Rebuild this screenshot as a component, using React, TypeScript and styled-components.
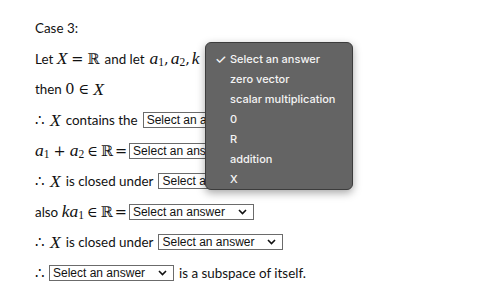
import React from "react"
import styled, { createGlobalStyle } from "styled-components"

const GlobalStyle = createGlobalStyle`
  body {
    margin: 0;
    background: #ffffff;
    font-family: Lato, "Open Sans", sans-serif;
    color: #111;
  }
`

const Page = styled.div`
  position: relative;
  width: 491px;
  height: 307px;
  padding: 13px 0 0 35px;
  box-sizing: border-box;
  overflow: hidden;
`

const Line = styled.div`
  display: flex;
  align-items: center;
  height: 30.6px;
  font-size: 13.4px;
  white-space: nowrap;
`

const M = styled.span<{ gap?: number; after?: number }>`
  font-family: "DejaVu Serif", "Liberation Serif", serif;
  font-size: 14.5px;
  margin: 0 ${({ after, gap }) => after ?? gap ?? 0}px 0 ${({ gap }) => gap ?? 0}px;
`

const I = styled.i`
  font-family: "Liberation Serif", "DejaVu Serif", serif;
  font-size: 17.5px;
`

const Sub = styled.span`
  font-family: "Liberation Serif", serif;
  font-size: 11.5px;
  position: relative;
  top: 3px;
`

const Word = styled.span`
  margin: 0 5px;
`

const SelectBox = styled.div<{ ml?: number }>`
  display: inline-flex;
  align-items: center;
  justify-content: space-between;
  width: 125px;
  height: 16px;
  box-sizing: border-box;
  border: 1px solid #6b6b6b;
  padding: 0 6px 0 3px;
  font-family: "Liberation Sans", Arial, sans-serif;
  font-size: 12px;
  color: #111;
  background: #fff;
  margin-left: ${({ ml }) => ml ?? 0}px;
`

const Chevron = () => (
  <svg width="9" height="6" viewBox="0 0 9 6">
    <path d="M1 1 L4.5 4.5 L8 1" fill="none" stroke="#111" strokeWidth="1.6" />
  </svg>
)

const Select = ({ ml }: { ml?: number }) => (
  <SelectBox ml={ml}>
    <span>Select an answer</span>
    <Chevron />
  </SelectBox>
)

const Menu = styled.div`
  position: absolute;
  left: 205px;
  top: 42px;
  width: 148px;
  height: 148px;
  box-sizing: border-box;
  background: #646464;
  border: 1px solid #3c3c3c;
  border-radius: 6px;
  box-shadow: 0 3px 8px rgba(0, 0, 0, 0.35);
  padding: 6px 0 0 0;
  font-family: Inter, "Liberation Sans", sans-serif;
  font-size: 11px;
  font-weight: 500;
  color: #f4f4f4;
`

const MenuItem = styled.div`
  display: flex;
  align-items: center;
  height: 20px;
  padding-left: 24px;
  position: relative;
`

const Check = styled.span`
  position: absolute;
  left: 9px;
  top: 2px;
  font-size: 13px;
`

const items = ["zero vector", "scalar multiplication", "0", "R", "addition", "X"]

export default function App() {
  return (
    <>
      <GlobalStyle />
      <Page>
        <Line>Case 3:</Line>
        <Line>
          Let&nbsp;<I>X</I>
          <M gap={4}>=</M>
          <M>ℝ</M>
          <Word>and let</Word>
          <I>a</I>
          <Sub>1</Sub>
          <M after={2}>,</M>
          <I>a</I>
          <Sub>2</Sub>
          <M after={2}>,</M>
          <I>k</I>
        </Line>
        <Line>
          then&nbsp;<M>0</M>
          <M gap={4}>∈</M>
          <I>X</I>
        </Line>
        <Line>
          <M after={5}>∴</M>
          <I>X</I>
          <Word>contains the</Word>
          <Select />
        </Line>
        <Line>
          <I>a</I>
          <Sub>1</Sub>
          <M gap={4}>+</M>
          <I>a</I>
          <Sub>2</Sub>
          <M gap={3}>∈</M>
          <M>ℝ</M>
          <M gap={2}>=</M>
          <Select />
        </Line>
        <Line>
          <M after={5}>∴</M>
          <I>X</I>
          <Word>is closed under</Word>
          <Select />
        </Line>
        <Line>
          also&nbsp;<I>ka</I>
          <Sub>1</Sub>
          <M gap={3}>∈</M>
          <M>ℝ</M>
          <M gap={2}>=</M>
          <Select />
        </Line>
        <Line>
          <M after={5}>∴</M>
          <I>X</I>
          <Word>is closed under</Word>
          <Select />
        </Line>
        <Line>
          <M>∴</M>
          <Select ml={4} />
          <Word>is a subspace of itself.</Word>
        </Line>
        <Menu>
          <MenuItem>
            <Check>✓</Check>Select an answer
          </MenuItem>
          {items.map((t) => (
            <MenuItem key={t}>{t}</MenuItem>
          ))}
        </Menu>
      </Page>
    </>
  )
}
